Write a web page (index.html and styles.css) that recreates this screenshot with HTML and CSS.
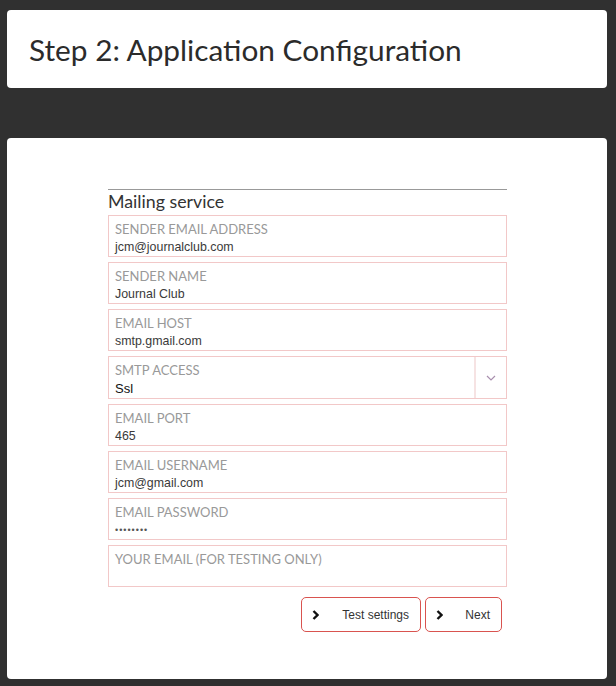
FILE: index.html
```html
<!DOCTYPE html>
<html>
<head>
<meta charset="utf-8">
<link rel="stylesheet" href="styles.css">
</head>
<body>
<div class="page">
  <div class="card header-card">
    <h1 class="title">Step 2: Application Configuration</h1>
  </div>
  <div class="card main-card">
    <form class="form">
      <div class="legend">Mailing service</div>
      <div class="field">
        <div class="label">SENDER EMAIL ADDRESS</div>
        <div class="value">jcm@journalclub.com</div>
      </div>
      <div class="field">
        <div class="label">SENDER NAME</div>
        <div class="value">Journal Club</div>
      </div>
      <div class="field">
        <div class="label">EMAIL HOST</div>
        <div class="value">smtp.gmail.com</div>
      </div>
      <div class="field field-select">
        <div class="select-main">
          <div class="label">SMTP ACCESS</div>
          <div class="value value-select">Ssl</div>
        </div>
        <div class="select-arrow">
          <svg width="10" height="6" viewBox="0 0 10 6"><path d="M1 1 L5 5 L9 1" fill="none" stroke="#a98fae" stroke-width="1.2"/></svg>
        </div>
      </div>
      <div class="field">
        <div class="label">EMAIL PORT</div>
        <div class="value">465</div>
      </div>
      <div class="field">
        <div class="label">EMAIL USERNAME</div>
        <div class="value">jcm@gmail.com</div>
      </div>
      <div class="field">
        <div class="label">EMAIL PASSWORD</div>
        <div class="value value-pass">••••••••</div>
      </div>
      <div class="field">
        <div class="label">YOUR EMAIL (FOR TESTING ONLY)</div>
        <div class="value"></div>
      </div>
      <div class="actions">
        <button type="button" class="btn btn-test">
          <svg class="chev" width="7" height="10" viewBox="0 0 7 10"><path d="M1.5 1 L5.5 5 L1.5 9" fill="none" stroke="#111" stroke-width="2.4"/></svg>
          <span>Test settings</span>
        </button>
        <button type="button" class="btn btn-next">
          <svg class="chev" width="7" height="10" viewBox="0 0 7 10"><path d="M1.5 1 L5.5 5 L1.5 9" fill="none" stroke="#111" stroke-width="2.4"/></svg>
          <span>Next</span>
        </button>
      </div>
    </form>
  </div>
</div>
</body>
</html>
```
FILE: styles.css
```css
html, body {
  margin: 0;
  padding: 0;
  background: #303030;
}
.page {
  padding: 10px 0 0 7px;
  width: 600px;
}
.card {
  background: #fff;
  border-radius: 4px;
  box-sizing: border-box;
}
.header-card {
  height: 78px;
  padding: 22px 0 0 22px;
}
.title {
  margin: 0;
  font-family: Lato, "Liberation Sans", sans-serif;
  font-weight: 400;
  font-size: 29.8px;
  line-height: 36px;
  color: #2b2b2b;
}
.main-card {
  margin-top: 50px;
  height: 541px;
  padding-top: 51px;
}
.form {
  width: 399px;
  margin: 0 0 0 101px;
}
.legend {
  border-top: 1px solid #999;
  font-family: Lato, "Liberation Sans", sans-serif;
  font-size: 17.8px;
  line-height: 22px;
  color: #333;
  padding: 0 0 3px 0;
}
.field {
  box-sizing: border-box;
  height: 42px;
  border: 1px solid #f2c8c8;
  margin-bottom: 5px;
  padding: 5px 6px 0 6px;
}
.label {
  font-family: Lato, "Liberation Sans", sans-serif;
  font-size: 13px;
  line-height: 16px;
  color: #999;
}
.value {
  font-family: "Liberation Sans", Arial, sans-serif;
  font-size: 12.4px;
  line-height: 16px;
  color: #3a3a3a;
  height: 16px;
  margin-top: 2px;
}
.value-select {
  font-size: 13px;
  color: #111;
  margin-top: 3px;
}
.value-pass {
  font-size: 9px;
  letter-spacing: 1px;
  color: #555;
}
.field-select {
  display: flex;
  height: 43px;
  padding: 0;
  margin-bottom: 5px;
}
.select-main {
  flex: 1;
  padding: 5px 6px 0 6px;
}
.select-arrow {
  box-sizing: border-box;
  width: 32px;
  border-left: 2px solid #f6e3e3;
  display: flex;
  align-items: center;
  justify-content: center;
}
.actions {
  display: flex;
  justify-content: flex-end;
  gap: 4px;
  margin-top: 10px;
  padding-right: 5px;
}
.btn {
  box-sizing: border-box;
  height: 35px;
  border: 1px solid #d9534f;
  border-radius: 5px;
  background: #fff;
  display: flex;
  align-items: center;
  justify-content: space-between;
  padding: 0 11px 0 10px;
  font-family: "Liberation Sans", Arial, sans-serif;
  font-size: 12px;
  color: #333;
  cursor: pointer;
}
.btn-test {
  width: 120px;
}
.btn-next {
  width: 77px;
}
.chev {
  display: block;
}
```
